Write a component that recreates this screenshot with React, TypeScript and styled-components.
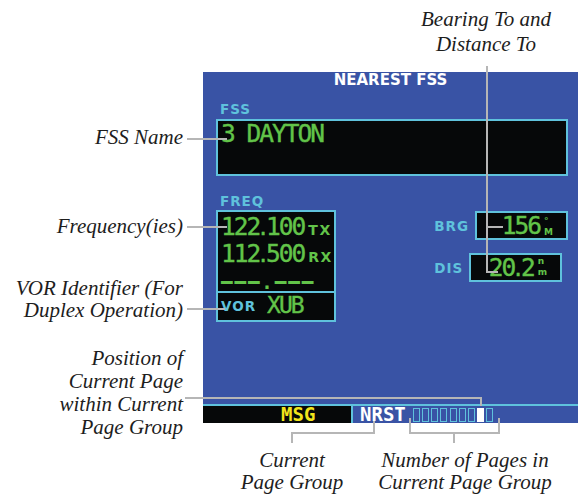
import React from 'react';
import styled, { createGlobalStyle } from 'styled-components';

const BLUE = '#3953a5';
const CYAN = '#5fc2dc';
const GREEN = '#62c449';
const YELLOW = '#f2e41b';
const INK = '#060809';
const LEADER = '#b6b6b6';

const GlobalStyle = createGlobalStyle`
  html, body {
    margin: 0;
    padding: 0;
    background: #fff;
  }
  body {
    font-family: "Liberation Serif", "Times New Roman", serif;
  }
`;

const Figure = styled.div`
  position: relative;
  width: 578px;
  height: 495px;
  box-sizing: border-box;
  padding: 72px 0 0 203px;
  overflow: hidden;
`;

const Screen = styled.div`
  width: 375px;
  height: 351px;
  background: ${BLUE};
  display: flex;
  flex-direction: column;
`;

const Title = styled.div`
  font-family: "DejaVu Sans", sans-serif;
  font-weight: bold;
  font-size: 15px;
  line-height: 16px;
  color: #fff;
  text-align: center;
`;

const Body = styled.div`
  flex: 1;
  padding: 0 10px 0 13px;
  display: flex;
  flex-direction: column;
`;

const FieldLabel = styled.div<{ $mt: number }>`
  margin-top: ${p => p.$mt}px;
  padding-left: 4px;
  font-family: "DejaVu Sans", sans-serif;
  font-weight: bold;
  font-size: 13.5px;
  line-height: 14px;
  letter-spacing: 1px;
  color: ${CYAN};
`;

const InlineLabel = styled.span`
  font-family: "DejaVu Sans", sans-serif;
  font-weight: bold;
  font-size: 13.5px;
  letter-spacing: 1px;
  color: ${CYAN};
`;

const Readout = styled.span<{ $size?: number }>`
  font-family: "DejaVu Sans Mono", monospace;
  font-size: ${p => p.$size ?? 24.5}px;
  letter-spacing: -2px;
  color: ${GREEN};
  -webkit-text-stroke: 0.4px ${GREEN};
`;

const Dot = styled.span`
  font-family: "DejaVu Sans", sans-serif;
  letter-spacing: -1px;
`;

const Suffix = styled.span`
  margin-left: 4px;
  font-family: "DejaVu Sans", sans-serif;
  font-weight: bold;
  font-size: 14px;
  line-height: 1;
  letter-spacing: 1.5px;
  color: ${GREEN};
`;

const DataBox = styled.div`
  box-sizing: border-box;
  border: 2px solid ${CYAN};
  background: ${INK};
`;

const NameBox = styled(DataBox)`
  margin-top: 3px;
  height: 57px;
  padding: 2px 0 0 3px;
  line-height: 22px;
`;

const LowerRow = styled.div`
  margin-top: 2px;
  display: flex;
  justify-content: space-between;
  align-items: flex-start;
`;

const FreqBox = styled(DataBox)`
  width: 120px;
  height: 112px;
  display: flex;
  flex-direction: column;
`;

const FreqList = styled.div`
  height: 82px;
  box-sizing: border-box;
  padding: 1px 0 0 3px;
`;

const FreqLine = styled.div`
  height: 27px;
  line-height: 27px;
  white-space: nowrap;
`;

const BlankLine = styled.div`
  margin-top: 7px;
  font-family: "DejaVu Sans Mono", monospace;
  font-weight: bold;
  font-size: 19px;
  line-height: 17px;
  letter-spacing: 2px;
  color: ${GREEN};
  white-space: nowrap;
`;

const VorRow = styled.div`
  flex: 1;
  border-top: 2px solid ${CYAN};
  padding-left: 3px;
  line-height: 24px;
  white-space: nowrap;

  & ${InlineLabel} {
    margin-right: 11px;
    vertical-align: 2px;
  }
`;

const NavColumn = styled.div`
  margin-top: 1px;
  display: flex;
  flex-direction: column;
  gap: 13px;
`;

const NavRow = styled.div`
  display: flex;
  align-items: center;
  gap: 6px;
`;

const NavBox = styled(DataBox)`
  width: 93px;
  height: 29px;
  padding-right: 13px;
  line-height: 25px;
  text-align: right;
  white-space: nowrap;
`;

const Units = styled.span<{ $pt: number }>`
  display: inline-flex;
  flex-direction: column;
  vertical-align: top;
  margin-left: 4px;
  padding-top: ${p => p.$pt}px;
  font-family: "DejaVu Sans", sans-serif;
  font-weight: bold;
  font-size: 9px;
  line-height: 10.5px;
  color: ${GREEN};
  text-align: left;
`;

const Spacer = styled.div`
  flex: 1;
`;

const StatusBar = styled.div`
  height: 19px;
  box-sizing: border-box;
  border-top: 2px solid ${CYAN};
  display: flex;
  font-family: "DejaVu Sans Mono", monospace;
  font-weight: bold;
  font-size: 19px;
  line-height: 17px;
`;

const MsgCell = styled.div`
  width: 148px;
  padding-left: 78px;
  box-sizing: border-box;
  background: ${INK};
  color: ${YELLOW};
`;

const GroupCell = styled.div`
  flex: 1;
  display: flex;
  align-items: flex-start;
  padding-left: 7px;
  border-left: 2px solid ${CYAN};
  color: #fff;
`;

const PageDots = styled.div`
  margin: 2px 0 0 7px;
  display: flex;
  gap: 2.2px;
`;

const PageDot = styled.span<{ $current?: boolean }>`
  width: 7px;
  height: 14px;
  box-sizing: border-box;
  border: 1.5px solid ${p => (p.$current ? '#fff' : CYAN)};
  background: ${p => (p.$current ? '#fff' : 'transparent')};
`;

const Callout = styled.div<{ $top: number; $left?: number; $right?: number; $width?: number; $lh: number }>`
  position: absolute;
  top: ${p => p.$top}px;
  ${p => (p.$left !== undefined ? `left: ${p.$left}px;` : '')}
  ${p => (p.$right !== undefined ? `right: ${p.$right}px;` : '')}
  ${p => (p.$width !== undefined ? `width: ${p.$width}px; text-align: center;` : 'text-align: right;')}
  font-family: "Liberation Serif", "Times New Roman", serif;
  font-style: italic;
  font-size: 21px;
  line-height: ${p => p.$lh}px;
  color: #1d1d1d;
  white-space: nowrap;
`;

const Leaders = styled.svg`
  position: absolute;
  left: 0;
  top: 0;
  pointer-events: none;
`;

const PAGE_COUNT = 9;
const CURRENT_PAGE = 7;

const leaderPaths = [
  'M187 139 H227',
  'M187 227 H227',
  'M187 309 H225',
  'M185 398 H481 V406',
  'M487 66 V272 H498',
  'M487 227 H503',
  'M374 421 V433 H292 V443',
  'M410 418 V433 H499 V418',
  'M454 433 V443',
];

const App = () => {
  return (
    <Figure>
      <GlobalStyle />
      <Screen>
        <Title>NEAREST FSS</Title>
        <Body>
          <FieldLabel $mt={14}>FSS</FieldLabel>
          <NameBox>
            <Readout>3 DAYTON</Readout>
          </NameBox>

          <FieldLabel $mt={18}>FREQ</FieldLabel>
          <LowerRow>
            <FreqBox>
              <FreqList>
                <FreqLine>
                  <Readout>122<Dot>.</Dot>100</Readout>
                  <Suffix>TX</Suffix>
                </FreqLine>
                <FreqLine>
                  <Readout>112<Dot>.</Dot>500</Readout>
                  <Suffix>RX</Suffix>
                </FreqLine>
                <BlankLine>━━━.━━━</BlankLine>
              </FreqList>
              <VorRow>
                <InlineLabel>VOR</InlineLabel>
                <Readout $size={23}>XUB</Readout>
              </VorRow>
            </FreqBox>

            <NavColumn>
              <NavRow>
                <InlineLabel>BRG</InlineLabel>
                <NavBox>
                  <Readout>156</Readout>
                  <Units $pt={3}>
                    <span>°</span>
                    <span>M</span>
                  </Units>
                </NavBox>
              </NavRow>
              <NavRow>
                <InlineLabel>DIS</InlineLabel>
                <NavBox>
                  <Readout>20<Dot>.</Dot>2</Readout>
                  <Units $pt={1}>
                    <span>n</span>
                    <span>m</span>
                  </Units>
                </NavBox>
              </NavRow>
            </NavColumn>
          </LowerRow>
          <Spacer />
        </Body>
        <StatusBar>
          <MsgCell>MSG</MsgCell>
          <GroupCell>
            NRST
            <PageDots>
              {Array.from({ length: PAGE_COUNT }, (_, i) => (
                <PageDot key={i} $current={i === CURRENT_PAGE} />
              ))}
            </PageDots>
          </GroupCell>
        </StatusBar>
      </Screen>

      <Callout $top={7} $left={406} $width={160} $lh={25}>
        Bearing To and<br />Distance To
      </Callout>
      <Callout $top={126} $right={395} $lh={23}>FSS Name</Callout>
      <Callout $top={215} $right={395} $lh={23}>Frequency(ies)</Callout>
      <Callout $top={277} $right={395} $lh={22}>
        VOR Identifier (For<br />Duplex Operation)
      </Callout>
      <Callout $top={347} $right={395} $lh={23}>
        Position of<br />Current Page<br />within Current<br />Page Group
      </Callout>
      <Callout $top={449} $left={212} $width={160} $lh={22}>
        Current<br />Page Group
      </Callout>
      <Callout $top={449} $left={365} $width={200} $lh={22}>
        Number of Pages in<br />Current Page Group
      </Callout>

      <Leaders width={578} height={495} viewBox="0 0 578 495">
        {leaderPaths.map(d => (
          <path key={d} d={d} fill="none" stroke={LEADER} strokeWidth={2} />
        ))}
      </Leaders>
    </Figure>
  );
};

export default App;
